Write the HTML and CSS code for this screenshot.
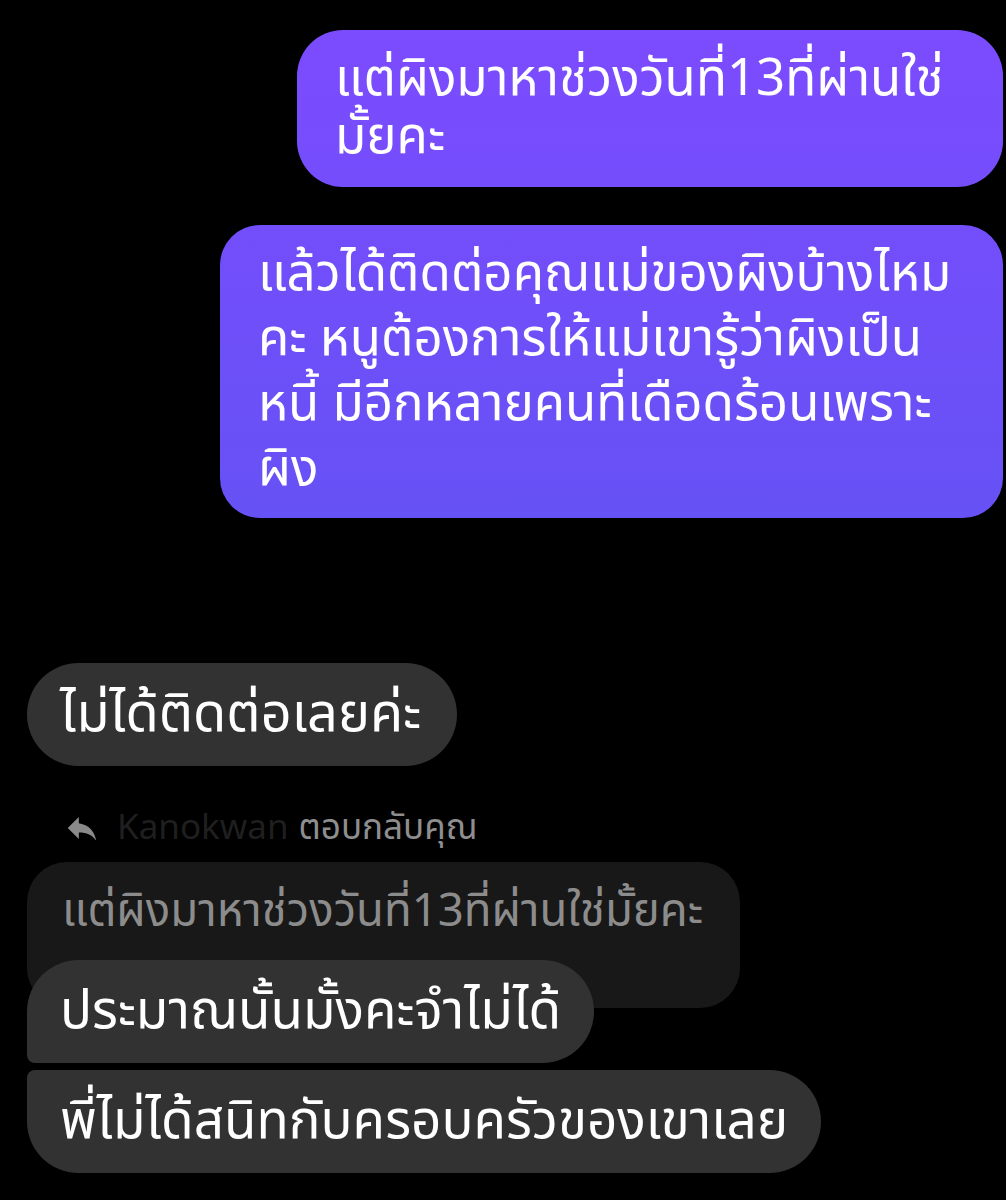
FILE: index.html
```html
<!DOCTYPE html>
<html lang="th">

<head>
    <title>Chat</title>
    <meta charset="utf-8">
    <link rel="stylesheet" href="styles.css">
</head>

<body>
    <div class="chat">
        <div class="row out">
            <div class="bubble sent b1">แต่ผิงมาหาช่วงวันที่13ที่ผ่านใช่<br>มั้ยคะ</div>
        </div>
        <div class="row out">
            <div class="bubble sent b2">แล้วได้ติดต่อคุณแม่ของผิงบ้างไหม<br>คะ หนูต้องการให้แม่เขารู้ว่าผิงเป็น<br>หนี้ มีอีกหลายคนที่เดือดร้อนเพราะ<br>ผิง</div>
        </div>

        <div class="row in gap-big">
            <div class="bubble recv single">ไม่ได้ติดต่อเลยค่ะ</div>
        </div>

        <div class="reply-head">
            <svg class="reply-icon" viewBox="0 0 24 24" width="38" height="38">
                <path d="M10 9V5l-7 7 7 7v-4.1c5 0 8.5 1.6 11 5.1-1-5-4-10-11-11z" fill="#8a8a8a"/>
            </svg>
            <span class="who">Kanokwan</span>
            <span class="what">ตอบกลับคุณ</span>
        </div>
        <div class="row in">
            <div class="quote">แต่ผิงมาหาช่วงวันที่13ที่ผ่านใช่มั้ยคะ</div>
        </div>
        <div class="row in over">
            <div class="bubble recv top">ประมาณนั้นมั้งคะจำไม่ได้</div>
        </div>
        <div class="row in">
            <div class="bubble recv bottom">พี่ไม่ได้สนิทกับครอบครัวของเขาเลย</div>
        </div>
    </div>
</body>

</html>
```
FILE: styles.css
```css
body {
    margin: 0;
    padding: 0;
    background: #000;
    font-family: "Noto Sans Thai", "Thonburi", "Noto Sans", "DejaVu Sans", sans-serif;
    color: #fff;
}

.chat {
    display: flex;
    flex-direction: column;
    padding: 30px 3px 0 27px;
    height: 1200px;
    box-sizing: border-box;
    overflow: hidden;
}

.row {
    display: flex;
}

.row.out {
    justify-content: flex-end;
    margin-bottom: 38px;
}

.row.in {
    justify-content: flex-start;
}

.bubble {
    position: relative;
    white-space: nowrap;
}

.sent {
    font-size: 51px;
    background: linear-gradient(#7d4bff, #6452f4);
    background-attachment: fixed;
    background-size: 100% 560px;
    background-repeat: no-repeat;
}

.b1 {
    width: 610px;
    line-height: 58px;
    padding: 21px 58px 20px 38px;
    border-radius: 46px;
}

.b2 {
    width: 707px;
    line-height: 65px;
    padding: 17px 38px 16px 38px;
    border-radius: 40px;
}

.recv {
    background: #323232;
    font-size: 53px;
    line-height: 64px;
    padding: 20px 33px 19px 33px;
    border-radius: 52px;
}

.single {
    font-size: 54px;
    padding-right: 36px;
}

.gap-big {
    margin-top: 107px;
}

.reply-head {
    display: flex;
    align-items: center;
    margin: 40px 0 0 36px;
    height: 44px;
    font-size: 35px;
}

.reply-icon {
    margin-right: 16px;
}

.who {
    color: #1f1f1f;
    margin-right: 10px;
}

.what {
    color: #8e8e8e;
}

.quote {
    background: #181818;
    color: #8c8c8c;
    font-size: 45.5px;
    line-height: 50px;
    padding: 25px 37px 71px 35px;
    border-radius: 40px;
    margin-top: 12px;
    white-space: nowrap;
}

.over {
    margin-top: -48px;
}

.top {
    border-radius: 52px 52px 52px 8px;
}

.bottom {
    margin-top: 7px;
    border-radius: 8px 52px 52px 52px;
}
```
